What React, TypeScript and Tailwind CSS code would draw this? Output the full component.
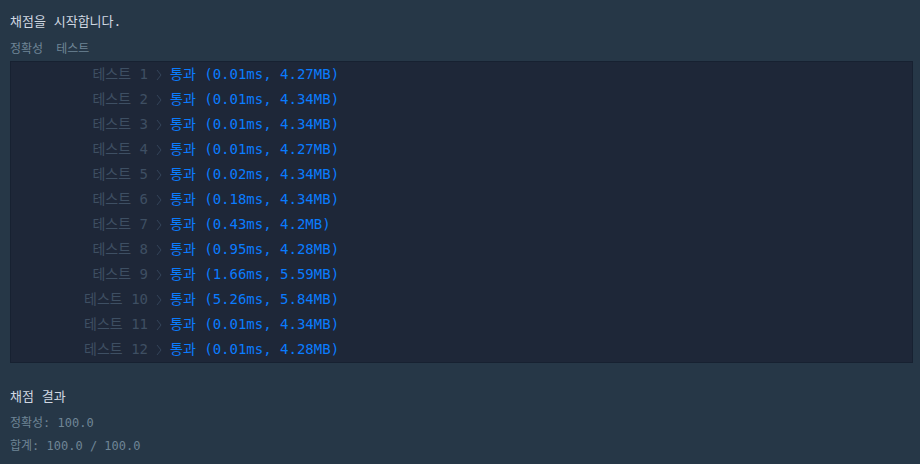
import React from 'react'

const mono = '"DejaVu Sans Mono", "Noto Sans CJK KR", monospace'

const results = [
  { n: 1, time: '0.01ms', mem: '4.27MB' },
  { n: 2, time: '0.01ms', mem: '4.34MB' },
  { n: 3, time: '0.01ms', mem: '4.34MB' },
  { n: 4, time: '0.01ms', mem: '4.27MB' },
  { n: 5, time: '0.02ms', mem: '4.34MB' },
  { n: 6, time: '0.18ms', mem: '4.34MB' },
  { n: 7, time: '0.43ms', mem: '4.2MB' },
  { n: 8, time: '0.95ms', mem: '4.28MB' },
  { n: 9, time: '1.66ms', mem: '5.59MB' },
  { n: 10, time: '5.26ms', mem: '5.84MB' },
  { n: 11, time: '0.01ms', mem: '4.34MB' },
  { n: 12, time: '0.01ms', mem: '4.28MB' },
]

const Chevron = () => (
  <svg width="8" height="14" viewBox="0 0 8 14" className="shrink-0">
    <path d="M2 2 L6 7 L2 12" fill="none" stroke="#34445a" strokeWidth="1" />
  </svg>
)

export default function App() {
  return (
    <div
      className="h-[464px] w-[920px] overflow-hidden bg-[#263747] text-[#d0d8e2]"
      style={{ fontFamily: mono }}
    >
      <div className="px-[10px] pt-[13px] text-[13px] leading-[18px]">채점을 시작합니다.</div>

      {/* tabs */}
      <div className="mt-[11px] flex gap-[13px] px-[10px] text-[12px] leading-[14px] text-[#6f8596]">
        <span>정확성</span>
        <span>테스트</span>
      </div>

      {/* result panel */}
      <div className="ml-[10px] mt-[5px] w-[903px] border border-[#172131] bg-[#1e2738]">
        {results.map((r) => (
          <div key={r.n} className="flex h-[25px] items-center text-[14px]">
            <div className="w-[137px] text-right text-[#3e4f63]">테스트 {r.n}</div>
            <div className="ml-[7px] mr-[7px] flex items-center">
              <Chevron />
            </div>
            <div className="text-[#0a7cff]">
              통과 ({r.time}, {r.mem})
            </div>
          </div>
        ))}
      </div>

      {/* summary */}
      <div className="px-[10px] pt-[25px]">
        <div className="text-[13px] leading-[18px] text-[#d0d8e2]">채점 결과</div>
        <div className="mt-[8px] text-[12px] leading-[18px] text-[#6f8596]">정확성: 100.0</div>
        <div className="mt-[5px] text-[12px] leading-[18px] text-[#6f8596]">합계: 100.0 / 100.0</div>
      </div>
    </div>
  )
}
